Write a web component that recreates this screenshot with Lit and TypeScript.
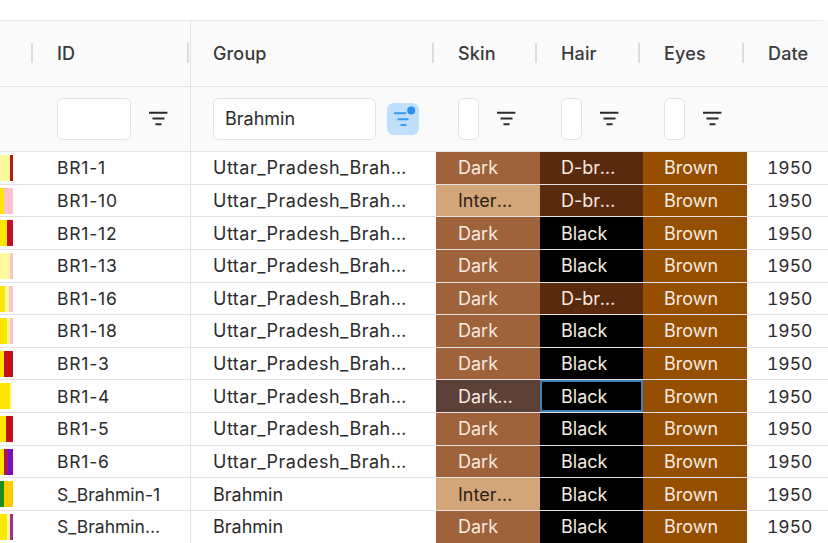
import { LitElement, html, css, svg } from 'lit';
import { customElement } from 'lit/decorators.js';
import { classMap } from 'lit/directives/class-map.js';

const Y = '#ffe600';
const PALE = '#fffaa0';
const PINK = '#ffc2cc';

type Row = {
  id: string;
  group: string;
  skin: string;
  hair: string;
  stripes: [string, number][];
};

const UP = 'Uttar_Pradesh_Brahmin';

const rows: Row[] = [
  { id: 'BR1-1', group: UP, skin: 'Dark', hair: 'D-brown', stripes: [[PALE, 9.5], ['#b71c1c', 3.5]] },
  { id: 'BR1-10', group: UP, skin: 'Intermediate', hair: 'D-brown', stripes: [[Y, 3.5], [PINK, 9.5]] },
  { id: 'BR1-12', group: UP, skin: 'Dark', hair: 'Black', stripes: [[Y, 6.5], ['#c2102c', 6.5]] },
  { id: 'BR1-13', group: UP, skin: 'Dark', hair: 'Black', stripes: [[PALE, 10], [PINK, 3]] },
  { id: 'BR1-16', group: UP, skin: 'Dark', hair: 'D-brown', stripes: [[Y, 4.5], [PALE, 4], [PINK, 4.5]] },
  { id: 'BR1-18', group: UP, skin: 'Dark', hair: 'Black', stripes: [[Y, 7], [PALE, 3], [PINK, 3]] },
  { id: 'BR1-3', group: UP, skin: 'Dark', hair: 'Black', stripes: [[Y, 4], ['#c4101c', 8.5]] },
  { id: 'BR1-4', group: UP, skin: 'Dark-Dark', hair: 'Black', stripes: [[Y, 10], [PALE, 2]] },
  { id: 'BR1-5', group: UP, skin: 'Dark', hair: 'Black', stripes: [[Y, 5.5], [PALE, 0.5], ['#c4101c', 7]] },
  { id: 'BR1-6', group: UP, skin: 'Dark', hair: 'Black', stripes: [[Y, 4], ['#a51c4c', 3.5], ['#7a0fc8', 5.5]] },
  { id: 'S_Brahmin-1', group: 'Brahmin', skin: 'Intermediate', hair: 'Black', stripes: [['#1f8a1f', 4], ['#ffcc00', 8.5]] },
  { id: 'S_Brahmin-10', group: 'Brahmin', skin: 'Dark', hair: 'Black', stripes: [[Y, 7], [PALE, 3], ['#a0308c', 3]] },
];

const SKIN: Record<string, string> = {
  Dark: 'skin-dark',
  Intermediate: 'skin-inter',
  'Dark-Dark': 'skin-deep',
};

const filterIcon = svg`
  <svg width="32" height="32" viewBox="0 0 32 32">
    <path d="M7 9.7h18.4M10.5 15.5h12M13.5 21.3h6" stroke="#2b2b2b" stroke-width="2" fill="none" />
  </svg>
`;

const activeFilterIcon = svg`
  <svg width="32" height="32" viewBox="0 0 32 32">
    <path d="M7 10.2h12M10.5 16.2h11M13.5 22h6" stroke="#3d9bee" stroke-width="2" fill="none" />
    <circle cx="24.2" cy="7.6" r="4" fill="#2a90ee" />
  </svg>
`;

@customElement('app-root')
export class AppRoot extends LitElement {
  static styles = css`
    :host {
      display: block;
      width: 828px;
      height: 543px;
      overflow: hidden;
      box-sizing: border-box;
      padding-top: 20px;
      background: #fff;
      font-family: Inter, 'Liberation Sans', sans-serif;
      font-size: 18px;
      color: #2b2b2b;
    }
    .table {
      border-top: 1px solid #e8e8e8;
      border-top-right-radius: 8px;
      overflow: hidden;
    }
    .row {
      display: grid;
      grid-template-columns: 35px 156px 245px 104px 103px 104px 81px;
      box-sizing: border-box;
      border-bottom: 1px solid #e3e3e3;
    }
    .row > :nth-child(n + 5) {
      padding-left: 21px;
    }
    .head {
      height: 65.5px;
      background: #fafafa;
    }
    .filters {
      height: 65.5px;
      background: #fafafa;
    }
    .data {
      height: 32.64px;
      background: #fff;
    }
    .cell {
      min-width: 0;
      box-sizing: border-box;
      padding: 0 22px;
      display: flex;
      align-items: center;
      white-space: nowrap;
    }
    .spacer {
      padding: 0;
    }
    .pin {
      border-right: 1px solid #e3e3e3;
    }
    .title {
      position: relative;
      color: #3a3a3a;
      font-weight: 450;
      letter-spacing: 0.15px;
    }
    .title.grip::after {
      content: '';
      position: absolute;
      right: 3px;
      top: 22px;
      width: 2px;
      height: 20px;
      background: #dddddd;
    }
    .title.near::after {
      right: 2px;
    }
    .title.pin::after {
      right: 1px;
    }
    .label {
      min-width: 0;
      overflow: hidden;
      text-overflow: ellipsis;
    }
    .code {
      font-size: 17.5px;
    }
    .code.spaced {
      letter-spacing: 0.8px;
    }
    .group .label {
      margin-right: 4px;
      letter-spacing: 0.5px;
    }
    .group .short {
      letter-spacing: 0;
    }
    .year {
      padding-right: 0;
    }
    .year .label {
      margin-left: -1px;
      font-size: 17.5px;
      font-variant-numeric: tabular-nums;
    }
    .filter {
      height: 100%;
      gap: 11px;
      padding-right: 0;
    }
    input {
      flex: none;
      box-sizing: border-box;
      height: 42px;
      padding: 0 11px;
      border: 1px solid #e3e3e3;
      border-radius: 6px;
      background: #fff;
      font: inherit;
      color: inherit;
      outline: none;
    }
    .w-id {
      width: 74px;
    }
    .w-group {
      width: 163px;
    }
    .w-small {
      width: 21px;
      padding: 0;
    }
    button {
      flex: none;
      width: 32px;
      height: 32px;
      padding: 0;
      border: 0;
      border-radius: 7px;
      background: none;
      display: block;
    }
    button svg {
      display: block;
    }
    button.active {
      background: #bfdffc;
    }
    .stripes {
      padding: 3px 0 2.6px;
      align-items: stretch;
    }
    .stripes span {
      display: block;
      flex: none;
    }
    .tint {
      color: #f6ebe0;
    }
    .skin-dark {
      background: #a0623a;
    }
    .skin-inter {
      background: #d2a679;
      color: #2b2118;
    }
    .skin-deep {
      background: #5d4037;
    }
    .hair-d-brown {
      background: #5a2a0e;
    }
    .hair-black {
      background: #000;
    }
    .eyes-brown {
      background: #964f00;
    }
    .selected {
      box-shadow: inset 0 0 0 2px #3f7fc0;
    }
  `;

  private renderFilter(width: string, value = '', active = false) {
    return html`
      <div class="cell filter">
        <input class=${width} .value=${value} />
        <button class=${classMap({ active })}>${active ? activeFilterIcon : filterIcon}</button>
      </div>
    `;
  }

  private renderRow(row: Row, index: number) {
    const hairClasses = {
      cell: true,
      tint: true,
      'hair-black': row.hair === 'Black',
      'hair-d-brown': row.hair !== 'Black',
      selected: index === 7,
    };
    const codeClasses = { label: true, code: true, spaced: row.id.startsWith('BR') };
    const groupClasses = { label: true, short: row.group === 'Brahmin' };
    return html`
      <div class="row data">
        <div class="cell stripes">
          ${row.stripes.map(
            ([color, width]) => html`<span style="background:${color};width:${width}px"></span>`
          )}
        </div>
        <div class="cell pin"><span class=${classMap(codeClasses)}>${row.id}</span></div>
        <div class="cell group"><span class=${classMap(groupClasses)}>${row.group}</span></div>
        <div class="cell tint ${SKIN[row.skin]}"><span class="label">${row.skin}</span></div>
        <div class=${classMap(hairClasses)}><span class="label">${row.hair}</span></div>
        <div class="cell tint eyes-brown"><span class="label">Brown</span></div>
        <div class="cell year"><span class="label">1950</span></div>
      </div>
    `;
  }

  render() {
    return html`
      <div class="table">
        <div class="row head">
          <div class="cell spacer title grip near"></div>
          <div class="cell title grip pin">ID</div>
          <div class="cell title grip near">Group</div>
          <div class="cell title grip">Skin</div>
          <div class="cell title grip">Hair</div>
          <div class="cell title grip">Eyes</div>
          <div class="cell title year">Date</div>
        </div>
        <div class="row filters">
          <div class="cell spacer"></div>
          <div class="pin">${this.renderFilter('w-id')}</div>
          ${this.renderFilter('w-group', 'Brahmin', true)}
          ${this.renderFilter('w-small')}
          ${this.renderFilter('w-small')}
          ${this.renderFilter('w-small')}
          <div class="cell spacer"></div>
        </div>
        ${rows.map((row, index) => this.renderRow(row, index))}
      </div>
    `;
  }
}
